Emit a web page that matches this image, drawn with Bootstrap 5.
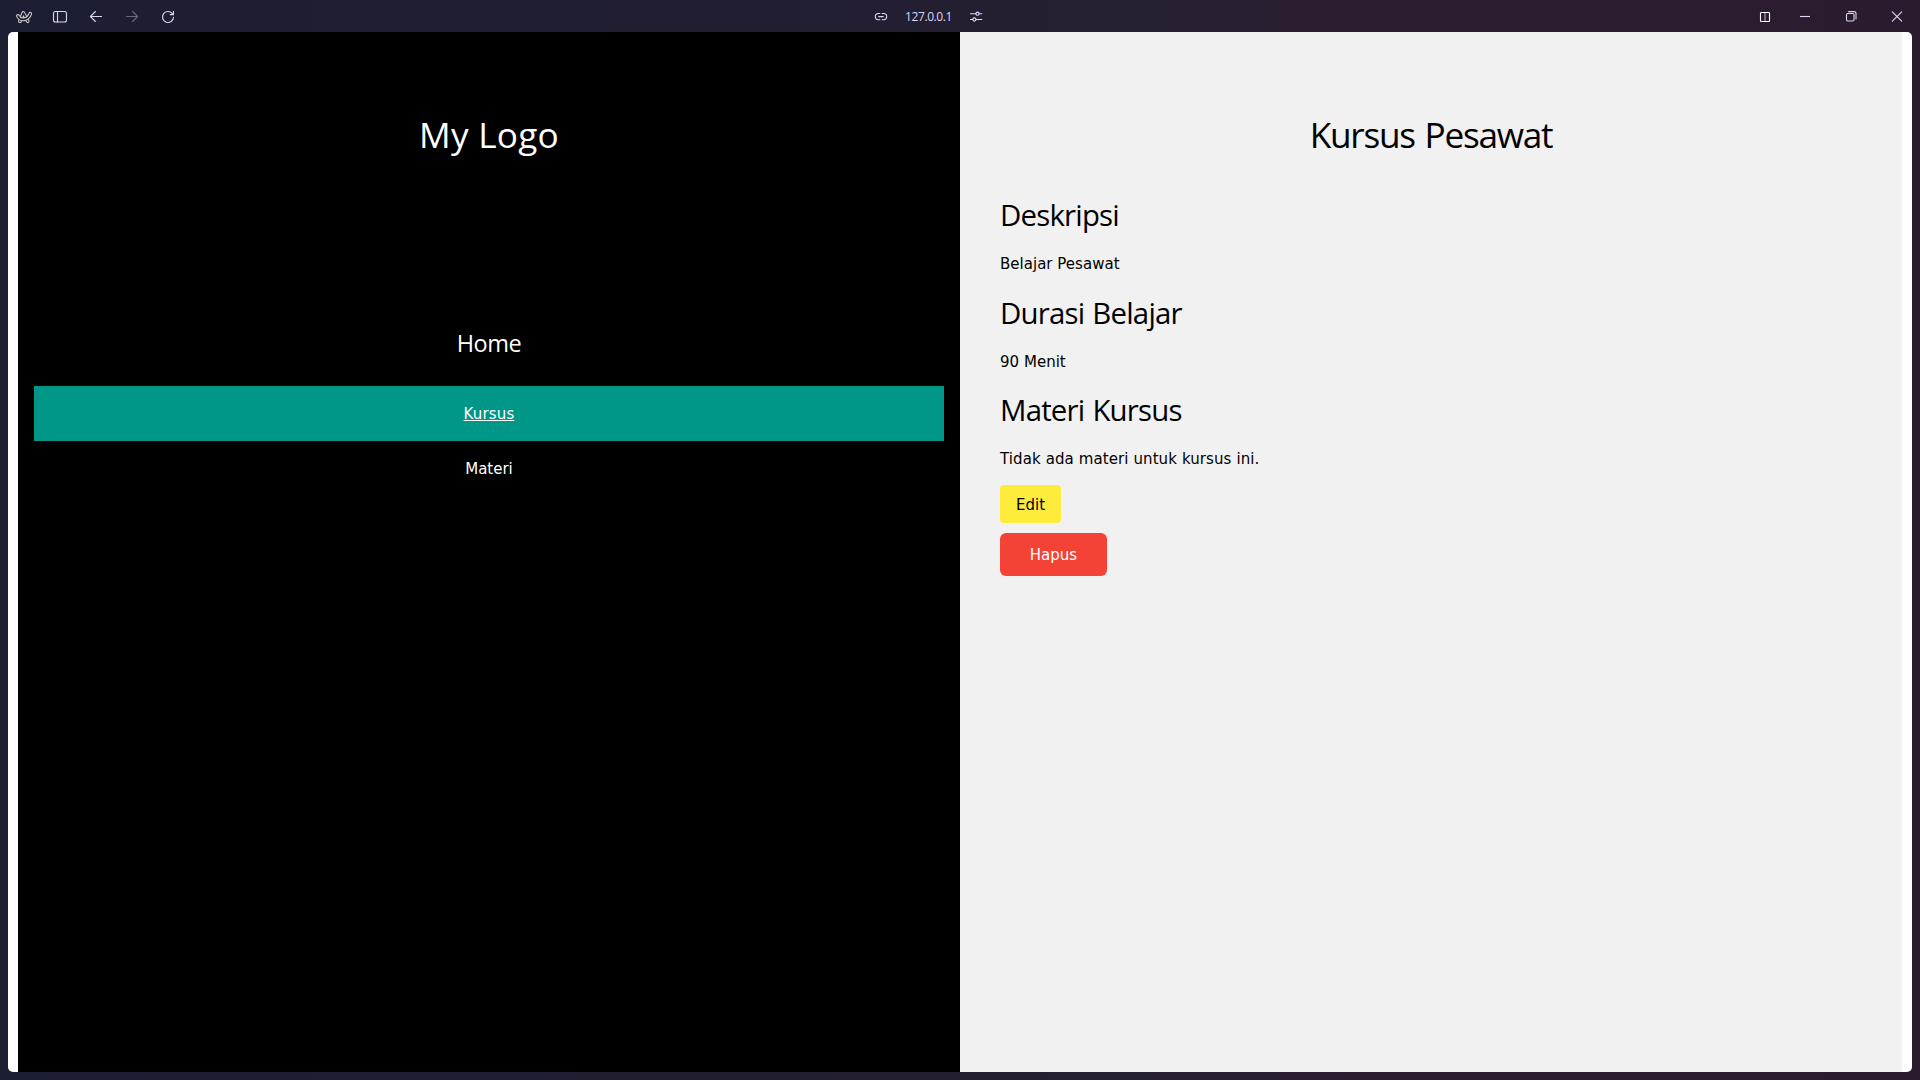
<!DOCTYPE html>
<html lang="id">
<head>
<meta charset="utf-8">
<title>Kursus Pesawat</title>
<link href="https://cdn.jsdelivr.net/npm/bootstrap@5.3.0/dist/css/bootstrap.min.css" rel="stylesheet">
<style>
body{height:1080px;overflow:hidden;background:linear-gradient(90deg,#1c1e33 0,#231e32 45%,#2c1e30 80%,#2a1c2e 100%);font:15px/1.5 "DejaVu Sans",sans-serif;color:#000}
.topbar{height:32px;padding:1px 15px 0 16px;color:#dbd6f7}
.topbar svg{display:block;flex:none;width:16px;height:16px;fill:none;stroke:currentColor;stroke-width:1.1;stroke-linecap:round;stroke-linejoin:round}
.topbar .arc-logo{stroke:#d2d2d0;overflow:visible}
.arc-logo .rim{stroke-width:3.7}
.arc-logo .core{stroke:#1c1e33;stroke-width:1.7}
.topbar .faded{opacity:.4}
.topbar .split{stroke:#fff}
.topbar .crisp{stroke-linecap:butt}
.tools{gap:20px;width:857px}
.address{font:12px "Open Sans","Noto Sans",sans-serif}
.address span{width:47px;margin:0 16px;letter-spacing:-.4px;white-space:nowrap}
.winbtns{gap:30px}
.winbtns .split{margin-right:-6px}
.page{height:1040px;margin:0 8px;padding:0 10px;background:#fff;border-radius:5px}
.side{background:#000;color:#fff;padding:75px 16px 0}
.main{background:#f1f1f1;padding:75px 40px 0}
h1,h2,.home{font-family:"Open Sans","Noto Sans",sans-serif;font-weight:400;margin:0}
h1{font-size:35.2px;line-height:54px;height:53px}
h2{font-size:29.4px;line-height:45px;margin:15px 0;letter-spacing:-.8px;word-spacing:1.2px}
p{margin:15px 0;letter-spacing:.02px}
.long-note{letter-spacing:.1px}
.brand{letter-spacing:.25px}
.course{letter-spacing:-1.25px;word-spacing:1.8px}
.menu{margin-top:149px}
.menu a{display:block;color:#fff;text-decoration:none;padding:17px 16px 15px;line-height:23px}
.menu .home{font-size:23.5px;line-height:36px;padding:16px;height:77px;letter-spacing:-.5px}
.menu .on{background:#009688;text-decoration:underline;text-underline-offset:1px;letter-spacing:.15px}
.main h1+h2{margin-top:33px}
.btn-y,.btn-r{display:block;border:0;padding:0;font-size:15px;line-height:22px}
.btn-y{width:61px;height:38px;padding-top:1px;background:#ffeb3b;color:#000;border-radius:4px}
.btn-r{width:107px;height:43px;background:#f44336;color:#fff;border-radius:6px;margin-top:10px}
.actions{margin-top:-.5px}
</style>
<script src="https://cdn.jsdelivr.net/npm/bootstrap@5.3.0/dist/js/bootstrap.bundle.min.js"></script>
</head>
<body>
<header class="topbar d-flex align-items-center">
  <div class="tools d-flex align-items-center">
    <svg class="arc-logo" viewBox="0 0 16 16"><path class="rim" d="M3.900 12.200L7.300 4l4.400 8.200"/><path class="core" d="M3.900 12.200L7.300 4l4.400 8.200"/><path class="rim" d="M1.900 6.900c1.300 2.700 4.200 3.900 6.900 3.200 2.600-.7 4.600-2.600 5.500-5.400"/><path class="core" d="M1.900 6.900c1.300 2.700 4.200 3.900 6.900 3.200 2.600-.7 4.600-2.600 5.500-5.400"/></svg>
    <svg viewBox="0 0 16 16"><rect x="1.500" y="2.500" width="13" height="10.500" rx="2"/><path d="M5.500 2.500V13"/></svg>
    <svg viewBox="0 0 16 16"><path d="M13.600 7.500H2.500M7.400 2.500l-5 5 5 5"/></svg>
    <svg class="faded" viewBox="0 0 16 16"><path d="M2.400 7.500h11.100M8.600 2.500l5 5-5 5"/></svg>
    <svg viewBox="0 0 16 16"><path d="M13.500 8.200A5.500 5.500 0 1 1 12.200 4.400L13.300 5.600M13.500 2.300V5.600H10.200"/></svg>
  </div>
  <div class="address d-flex align-items-center">
    <svg viewBox="0 0 16 16"><path d="M6.800 4.500H5.400a3 3 0 0 0 0 6.200h1.400M9.200 4.500h1.400a3 3 0 0 1 0 6.200H9.200M5.700 7.600h4.600"/></svg>
    <span>127.0.0.1</span>
    <svg viewBox="0 0 16 16"><path d="M2.500 4.700h5.300M11.300 4.700h2.500M2.500 10.500h2.200M8.200 10.500h5.600"/><circle cx="9.500" cy="4.700" r="1.600"/><circle cx="6.400" cy="10.500" r="1.600"/></svg>
  </div>
  <div class="winbtns d-flex align-items-center ms-auto">
    <svg class="split" viewBox="0 0 16 16"><rect x="3.500" y="3.500" width="9" height="9" rx=".7"/><path d="M8 3.500v9" opacity=".65"/></svg>
    <svg class="crisp" viewBox="0 0 16 16"><path d="M3 7.500h10"/></svg>
    <svg viewBox="0 0 16 16"><rect x="3.500" y="4.500" width="7.500" height="7.500" rx="1.200"/><path d="M5.500 2.600H11a2 2 0 0 1 2 2V10"/></svg>
    <svg viewBox="0 0 16 16"><path d="M3.300 2.800l9.400 9.400M12.700 2.800l-9.400 9.400"/></svg>
  </div>
</header>
<main class="page d-flex">
  <nav class="side w-50 text-center">
    <h1 class="brand">My Logo</h1>
    <div class="menu">
      <a class="home" href="#">Home</a>
      <a class="on" href="#">Kursus</a>
      <a href="#">Materi</a>
    </div>
  </nav>
  <section class="main w-50">
    <h1 class="text-center course">Kursus Pesawat</h1>
    <h2>Deskripsi</h2>
    <p>Belajar Pesawat</p>
    <h2>Durasi Belajar</h2>
    <p>90 Menit</p>
    <h2>Materi Kursus</h2>
    <p class="long-note">Tidak ada materi untuk kursus ini.</p>
    <div class="actions">
      <button class="btn-y" type="button">Edit</button>
      <button class="btn-r" type="button">Hapus</button>
    </div>
  </section>
</main>
</body>
</html>
